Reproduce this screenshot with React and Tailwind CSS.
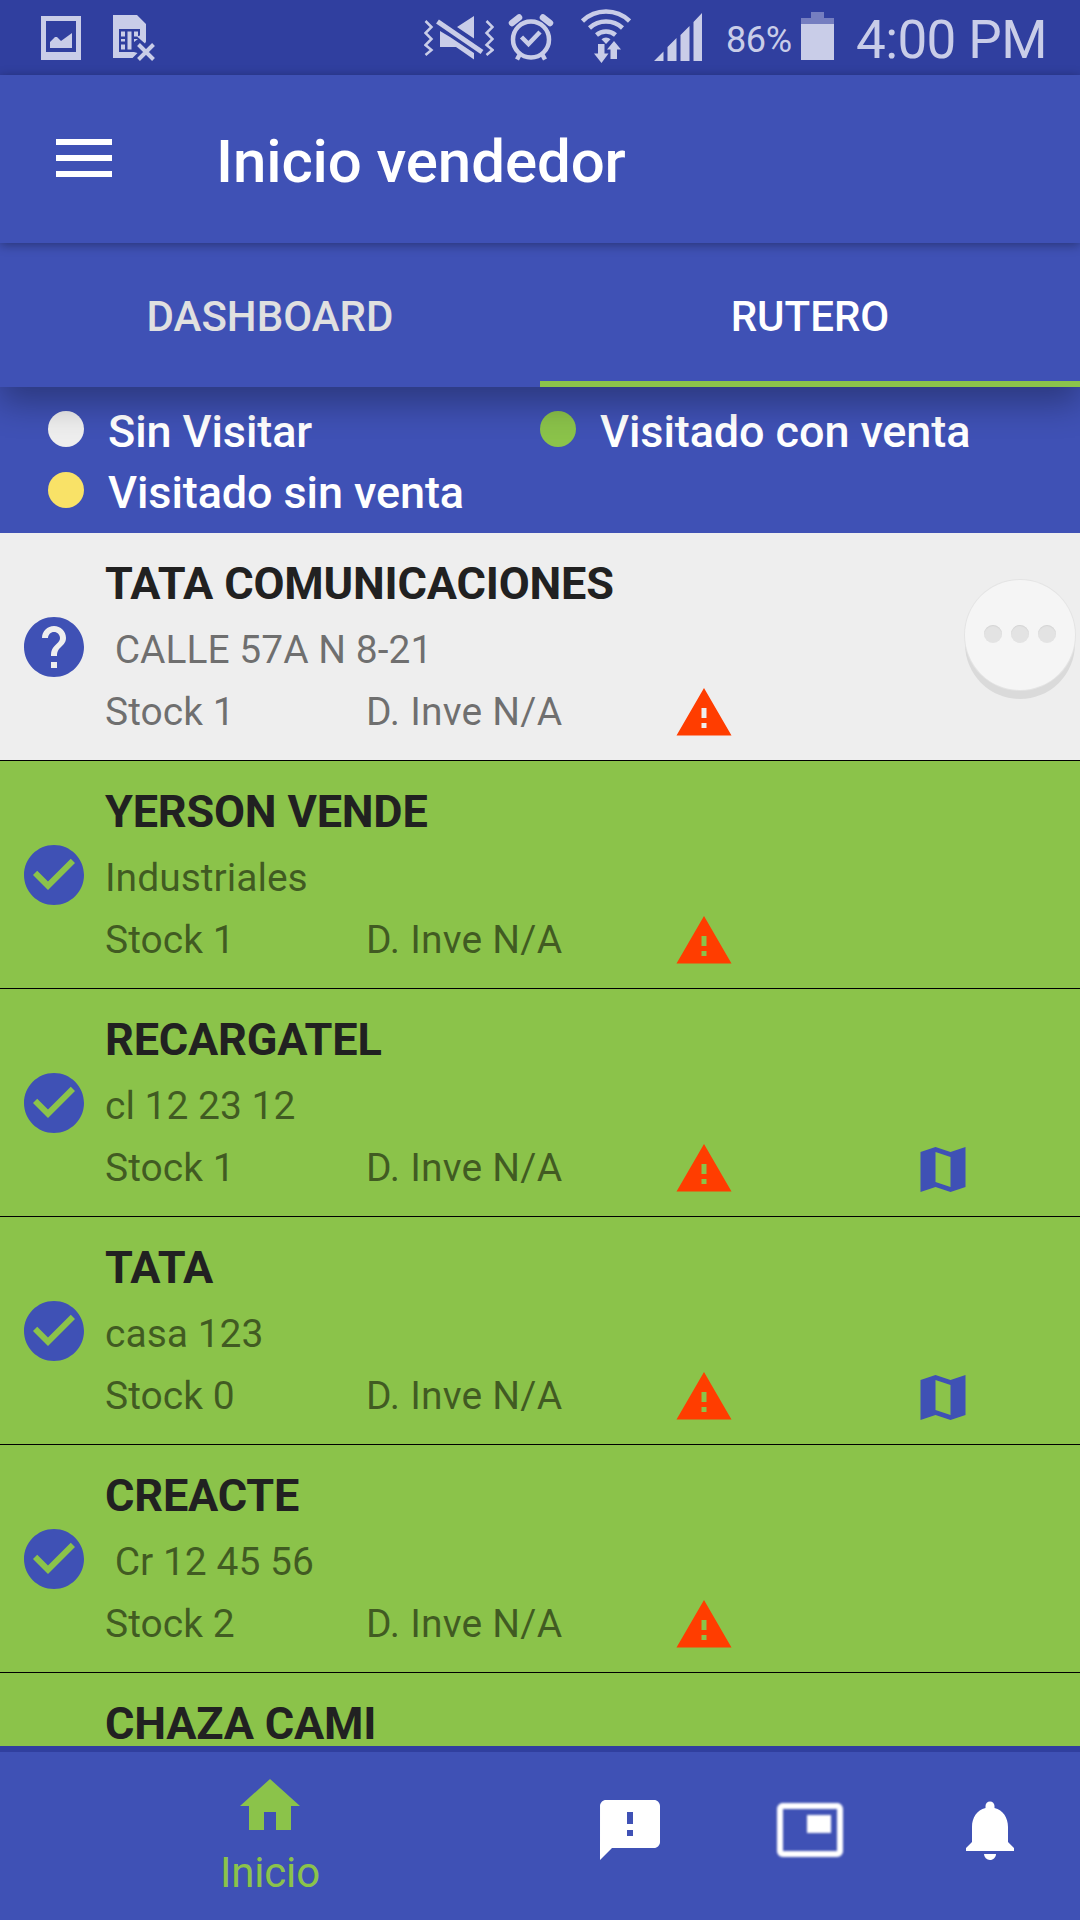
import React, { useState } from 'react';
import {
  MdCheckCircle,
  MdFeedback,
  MdHelp,
  MdNotifications,
  MdPictureInPicture,
  MdWarning,
} from 'react-icons/md';

const legend = [
  { label: 'Sin Visitar', dot: 'bg-[#eeeeee]' },
  { label: 'Visitado con venta', dot: 'bg-[#8bc34a]' },
  { label: 'Visitado sin venta', dot: 'bg-[#f9e267]' },
];

const customers = [
  { name: 'TATA COMUNICACIONES', address: ' CALLE 57A N 8-21', stock: 1, visited: false, map: false },
  { name: 'YERSON VENDE', address: 'Industriales', stock: 1, visited: true, map: false },
  { name: 'RECARGATEL', address: 'cl 12 23 12', stock: 1, visited: true, map: true },
  { name: 'TATA', address: 'casa 123', stock: 0, visited: true, map: true },
  { name: 'CREACTE', address: ' Cr 12 45 56', stock: 2, visited: true, map: false },
  { name: 'CHAZA CAMI', visited: true },
];

const MapIcon = () => (
  <svg viewBox="0 0 24 24" className="size-15 text-[#3f51b5]" fill="currentColor">
    <path fillRule="evenodd" d="M3 5.2 9 3.2l6 2 6-2v16l-6 2-6-2-6 2zM9 5.2v12l6 2v-12z" />
  </svg>
);

const HomeIcon = () => (
  <svg viewBox="0 0 24 24" className="size-18" fill="currentColor">
    <path d="M10 20v-6h4v6h5v-8h3L12 3 2 12h3v8z" />
  </svg>
);

const PhotoIcon = () => (
  <svg width="40" height="44" viewBox="0 0 40 44" fill="currentColor">
    <path fillRule="evenodd" d="M0 0h40v44H0zM5 5v31h30V5z" />
    <path d="M9 32v-6l5-5h2l4 4 11-8v15z" />
  </svg>
);

const SimIcon = () => (
  <svg width="43" height="47" viewBox="0 0 43 47" fill="currentColor">
    <path fillRule="evenodd" d="M0 0h24l9 9v17.500l-1 2-8-7 3-1V14H6v23h15l3.500 1-5 5H0z" />
    <path d="M8 16.500h4v5H8zM8 24h4v2.500H8zM8 29.500h4v5H8zM14.500 16.500h4v18h-4zM21 16.500h4v5h-4zM21 24h4l-4 3z" />
    <path d="m25.500 29.500 15 15M40.500 29.500l-15 15" stroke="currentColor" strokeWidth="4" fill="none" />
  </svg>
);

const MutedIcon = () => (
  <svg width="70" height="46" viewBox="0 0 70 46" fill="currentColor">
    <path d="M1.500 6l6 6-6 6 6 6-6 6 6 5-6 5M62.500 6l6 6-6 6 6 6-6 6 6 5-6 5" stroke="currentColor" strokeWidth="2.500" fill="none" />
    <path d="M16 16v16h16L50 44.500V38L26 22zM33 12 50 1v22.500z" />
    <path d="M13.500 6.500 58 37" stroke="#303f9f" strokeWidth="10" />
    <path d="M13.500 6.500 58 37" stroke="currentColor" strokeWidth="5" />
  </svg>
);

const AlarmIcon = () => (
  <svg width="46" height="48" viewBox="0 0 46 48" fill="none" stroke="currentColor">
    <circle cx="23" cy="26.500" r="18" strokeWidth="4.500" />
    <path d="M4 10 11 4.500M35 4.500l7 5.500" strokeWidth="6.500" strokeLinecap="round" />
    <path d="m13.500 24 7 7L32 19" strokeWidth="4.500" />
    <path d="m12 41-3 5.500M34 41l3 5.500" strokeWidth="4.500" />
  </svg>
);

const WifiIcon = () => (
  <svg width="50" height="54" viewBox="0 0 50 54" fill="none" stroke="currentColor">
    <path d="M1.500 12a34 34 0 0 1 47 0" strokeWidth="4.500" />
    <path d="M8.500 19a24.500 24.500 0 0 1 33 0" strokeWidth="4.500" />
    <path d="M15.500 26a14.500 14.500 0 0 1 19 0" strokeWidth="4.500" />
    <path d="m25 35-4.500-4.800a6.500 6.500 0 0 1 9 0z" fill="currentColor" stroke="none" />
    <path d="M17 35h6.500v9.500h4L20.500 54l-7.500-9.500h4zM29.500 50v-9.500h-3.500L33 32l7 8.500h-4V50z" fill="currentColor" stroke="none" />
  </svg>
);

const SignalIcon = () => (
  <svg width="48" height="49" viewBox="0 0 48 49" fill="currentColor">
    <path d="M0 48h9.500v-9.500zM13.500 48h9V25l-9 9zM26.500 48h9V13l-9 9zM39.500 48h8.500V0l-8.500 9z" />
  </svg>
);

const BatteryIcon = () => (
  <svg width="33" height="48" viewBox="0 0 33 48" fill="currentColor">
    <path d="M0 6h10V0h13v6h10v6H0z" opacity=".45" />
    <path d="M0 12h33v36H0z" />
  </svg>
);

const StatusBar = () => (
  <header className="flex h-[75px] items-start bg-[#303f9f] pl-[41px] text-[#c9cde8]">
    <div className="flex w-[383px] gap-8 pt-[15px]">
      <div className="pt-px"><PhotoIcon /></div>
      <SimIcon />
    </div>
    <div className="flex">
      <div className="pt-[15px]"><MutedIcon /></div>
      <div className="pl-[14px] pt-[13px]"><AlarmIcon /></div>
      <div className="pl-[27px] pt-[9px]"><WifiIcon /></div>
      <div className="pl-[23px] pt-[13px]"><SignalIcon /></div>
      <span className="w-[99px] pl-6 pt-[19px] text-[36px] leading-[42px] tracking-[-0.4px]">86%</span>
      <div className="pt-3"><BatteryIcon /></div>
      <span className="pl-[22px] pt-[9px] text-[53px] leading-[62px] tracking-[-0.6px]">4:00 PM</span>
    </div>
  </header>
);

const CustomerRow = ({ customer }) => (
  <li
    className={`flex h-[228px] shrink-0 border-b border-black ${
      customer.visited ? 'bg-[#8bc34a]' : 'bg-[#eeeeee]'
    }`}
  >
    <div className="w-[105px] pl-[18px] pt-[78px] text-[#3f51b5]">
      {customer.visited ? <MdCheckCircle className="size-18" /> : <MdHelp className="size-18" />}
    </div>
    <div className="flex-1 pt-[29px]">
      <h2 className="text-[45px] font-bold leading-[44px] tracking-[-0.18px] text-[#212121]">{customer.name}</h2>
      {customer.address && (
        <>
          <p className="mt-[14px] h-[60px] whitespace-pre text-[39px] leading-[60px] text-black/54">
            {customer.address}
          </p>
          <div className="mt-[3px] flex text-[39px] leading-[59px] text-black/54">
            <span className="w-[261px]">Stock {customer.stock}</span>
            <span className="w-[307.500px] tracking-[0.2px]">D. Inve N/A</span>
            <span className="w-[239px]"><MdWarning className="size-15 text-[#ff3d00]" /></span>
            {customer.map && <MapIcon />}
          </div>
        </>
      )}
    </div>
  </li>
);

const App = () => {
  const [tab, setTab] = useState('RUTERO');

  return (
    <div className="relative flex h-[1920px] w-[1080px] flex-col overflow-hidden bg-[#3f51b5] font-['Roboto',sans-serif]">
      <StatusBar />

      <div className="relative z-20 flex h-[168px] shrink-0 items-center bg-[#3f51b5] pl-14 shadow-[0_2px_10px_rgba(0,0,0,0.35)]">
        <button className="flex flex-col gap-2.5 pb-0.5" aria-label="Menu">
          <span className="h-1.5 w-14 bg-white" />
          <span className="h-1.5 w-14 bg-white" />
          <span className="h-1.5 w-14 bg-white" />
        </button>
        <h1 className="pt-1.5 pl-[104px] text-[60px] font-medium leading-[70px] tracking-[-0.1px] text-white">Inicio vendedor</h1>
      </div>

      <nav className="relative z-10 grid h-36 shrink-0 grid-cols-2 bg-[#3f51b5] shadow-[0_16px_32px_rgba(0,0,0,0.3)]">
        {['DASHBOARD', 'RUTERO'].map((name) => (
          <button
            key={name}
            onClick={() => setTab(name)}
            className={`border-b-6 pt-2 text-[42px] font-medium ${
              tab === name ? 'border-[#8bc34a] text-white' : 'border-transparent text-[#e0e0e0]'
            }`}
          >
            {name}
          </button>
        ))}
      </nav>

      <div className="grid h-[146px] shrink-0 grid-cols-[492px_1fr] content-start pl-12 pt-[14px]">
        {legend.map((item) => (
          <div key={item.label} className="flex h-[61px] items-center gap-6">
            <span className={`-mt-1.5 size-9 rounded-full ${item.dot}`} />
            <span className="text-[45px] font-medium leading-[61px] tracking-[-0.1px] text-white">{item.label}</span>
          </div>
        ))}
      </div>

      <ul className="flex h-[1213px] shrink-0 flex-col overflow-hidden">
        {customers.map((customer) => (
          <CustomerRow key={customer.name} customer={customer} />
        ))}
      </ul>

      <footer className="grid flex-1 grid-cols-[540px_180px_180px_180px] border-t-6 border-[#303f9f] text-white">
        <button className="flex flex-col items-center pt-[18px] text-[#8bc34a]">
          <HomeIcon />
          <span className="text-[42px] leading-[62px] tracking-[-0.2px]">Inicio</span>
        </button>
        <button className="flex justify-center pt-[42px]"><MdFeedback className="size-18" /></button>
        <button className="flex justify-center pt-[42px]"><MdPictureInPicture className="size-18 blur-[0.8px]" /></button>
        <button className="flex justify-center pt-[42px]"><MdNotifications className="size-18" /></button>
      </footer>

      {/* Floating assistant button */}
      <button
        aria-label="Más opciones"
        className="absolute left-[965px] top-[580px] flex size-[110px] items-center justify-center gap-[9px] rounded-full bg-[#f5f5f5] pb-0.5 shadow-[0_0_0_1px_#e4e4e4,0_9px_0_0_#dadada]"
      >
        <span className="size-[18px] rounded-full bg-[#e3e3e3] shadow-[inset_0_1px_1px_#d4d4d4]" />
        <span className="size-[18px] rounded-full bg-[#e3e3e3] shadow-[inset_0_1px_1px_#d4d4d4]" />
        <span className="size-[18px] rounded-full bg-[#e3e3e3] shadow-[inset_0_1px_1px_#d4d4d4]" />
      </button>
    </div>
  );
};

export default App;
